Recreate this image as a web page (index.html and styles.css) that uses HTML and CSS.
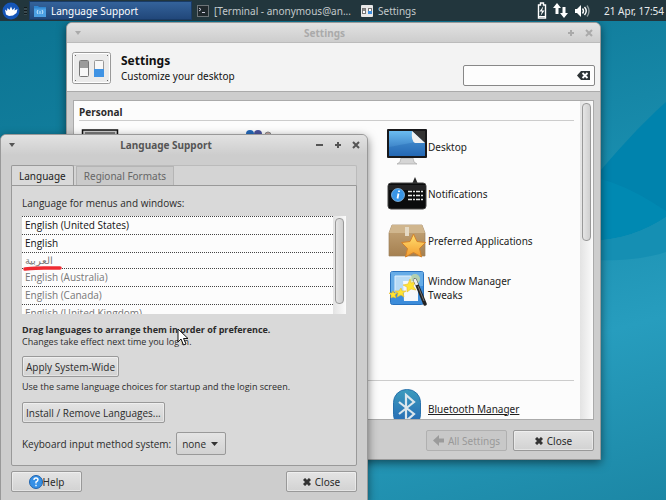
FILE: index.html
```html
<!DOCTYPE html>
<html lang="en">

<head>
    <meta charset="UTF-8">
    <meta name="viewport" content="width=device-width, initial-scale=1">
    <title>Language Support</title>
    <link rel="stylesheet" href="styles.css">
</head>

<body>

    <header class="panel">
        <button class="panel-menu" aria-label="Applications">
            <svg width="18" height="18" viewBox="0 0 18 18">
                <circle cx="9" cy="9" r="8.500" fill="#1556b8" />
                <path d="M4 12.500 3 7.500 5 9 5.500 6 7.500 8 9 4.500 10.500 8 13 5.500 12.500 8.500 15.500 7 14.500 11 11 13.500 7 14Z" fill="#fff" />
            </svg>
        </button>
        <span class="handle"></span>
        <button class="task task-active">
            <svg width="14" height="14" viewBox="0 0 14 14">
                <path d="M1 2h4l1 1h7v9H1z" fill="#2f86d0" />
                <path d="M1 4.500h12V13H1z" fill="#4b9fe2" />
                <path d="M5 6 4 8l1 2M9 6l1 2-1 2M7 7v3" fill="none" stroke="#c5e5ff" />
            </svg>
            <span>Language Support</span>
        </button>
        <button class="task task-terminal">
            <svg width="12" height="12" viewBox="0 0 12 12">
                <rect x=".5" y=".5" width="11" height="11" fill="#20292d" stroke="#6d7478" />
                <path d="m2 3 2 1.500L2 6M5 7.500h3" fill="none" stroke="#ccd" />
            </svg>
            <span>[Terminal - anonymous@an...</span>
        </button>
        <button class="task">
            <svg width="12" height="12" viewBox="0 0 12 12">
                <rect width="12" height="12" rx="1" fill="#e8e8e8" />
                <rect x="1.500" y="3.500" width="3" height="5" fill="#fff" stroke="#777" />
                <rect x="7.500" y="3.500" width="3" height="5" fill="#fff" stroke="#777" />
                <path d="M2 4h2v2H2z" fill="#888" />
                <path d="M7 6h4v3H7z" fill="#3c8ee0" />
            </svg>
            <span>Settings</span>
        </button>
        <div class="tray">
            <svg width="10" height="17" viewBox="0 0 10 17">
                <path d="M3.500 1h3v2h2v13h-7V3h2z" fill="none" stroke="#fff" stroke-width="1.400" />
                <path d="M6.500 4 2.500 9.500H5L3.500 14l4-5.500H5z" fill="#fff" />
                <path d="M2 14.500h6" stroke="#fff" />
            </svg>
            <svg width="15" height="15" viewBox="0 0 15 15">
                <path d="M4 0 0 5h2.500v6h3V5H8zM11 15l4-5h-2.500V4h-3v6H7z" fill="#fff" />
            </svg>
            <svg width="17" height="14" viewBox="0 0 17 14">
                <path d="M1 5h2l4-4v12L3 9H1z" fill="#fff" />
                <path d="M8.500 4.500q2 2.500 0 5M10.500 3q3.500 4 0 8" fill="none" stroke="#fff" stroke-width="1.400" />
                <path d="M13 1.500q4 5.500 0 11" fill="none" stroke="#8d989b" stroke-width="1.400" />
            </svg>
            <time class="clock">21 Apr, 17:54</time>
        </div>
    </header>

    <main class="desktop">
        <svg class="wallpaper" viewBox="0 0 666 479" preserveAspectRatio="none" aria-hidden="true">
            <path d="M666 81C640 104 615 132 590 162V220C620 219 645 210 666 196Z" fill="#0083ad" />
            <path d="M590 155C630 165 650 180 666 190V196C645 210 620 219 590 220Z" fill="#008fb7" opacity=".5" />
            <path d="M666 196C645 210 620 219 590 220V239C620 240 645 238 666 231Z" fill="#158fb3" />
        </svg>

        <section class="window settings">
            <div class="titlebar titlebar-idle">
                <button class="wm-btn" aria-label="Window menu"><svg width="8" height="8" viewBox="0 0 8 8"><path d="M1 2h6L4 6z" /></svg></button>
                <h2>Settings</h2>
                <button class="wm-btn" aria-label="Maximize"><svg width="8" height="8" viewBox="0 0 8 8"><path d="M3 1h2v2h2v2H5v2H3V5H1V3h2z" /></svg></button>
                <button class="wm-btn" aria-label="Close"><svg width="8" height="8" viewBox="0 0 8 8"><path d="m1 1 6 6M7 1 1 7" class="stroke" /></svg></button>
            </div>

            <div class="banner">
                <svg width="39" height="32" viewBox="0 0 39 32">
                    <rect x=".5" y=".5" width="38" height="31" rx="2" fill="#ebebeb" stroke="#999" />
                    <rect x="1.500" y="1.500" width="36" height="29" rx="1" fill="none" stroke="#fff" />
                    <rect x="7.500" y="8.500" width="9" height="16" rx="1" fill="#f8f8f8" stroke="#777" />
                    <path d="M8 9h8v7H8z" fill="#9b9b9b" />
                    <rect x="22.500" y="8.500" width="9" height="16" rx="1" fill="#f8f8f8" stroke="#999" />
                    <path d="M22 17h10v8H22z" fill="#3f93e4" />
                    <path d="M3 3h1v1H3zM35 3h1v1h-1zM3 28h1v1H3zM35 28h1v1h-1z" fill="#666" />
                </svg>
                <div class="banner-text">
                    <h1>Settings</h1>
                    <p>Customize your desktop</p>
                </div>
                <label class="search">
                    <input type="search" aria-label="Search settings">
                    <svg width="13" height="9" viewBox="0 0 13 9">
                        <path d="M4 0h9v9H4L0 4.500z" fill="#2e3436" />
                        <path d="m5.500 2 5 5M10.500 2l-5 5" stroke="#fff" stroke-width="1.800" />
                    </svg>
                </label>
            </div>

            <div class="settings-box">
                <div class="settings-scroll">
                    <section class="group personal">
                        <h3>Personal</h3>
                        <div class="items">
                            <div class="column" aria-hidden="true">
                                <svg width="40" height="36" viewBox="0 0 40 36">
                                    <rect x="3.500" y="1" width="35" height="28" fill="#ccc" stroke="#111" stroke-width="1.500" />
                                    <path d="M6 3h30v3H6z" fill="#777" />
                                </svg>
                            </div>
                            <div class="column" aria-hidden="true">
                                <svg width="44" height="36" viewBox="0 0 44 36">
                                    <circle cx="17" cy="5" r="4" fill="#2468b8" />
                                    <circle cx="25" cy="5" r="4" fill="#4a539c" />
                                    <circle cx="35" cy="6" r="3" fill="#c8a8a0" stroke="#888" />
                                </svg>
                            </div>
                            <div class="column">
                                <a href="#desktop" class="item">
                                    <svg width="40" height="36" viewBox="0 0 40 36">
                                        <defs>
                                            <linearGradient id="screen" x2="0" y2="1">
                                                <stop stop-color="#6bbcf0" />
                                                <stop offset="1" stop-color="#2567b4" />
                                            </linearGradient>
                                        </defs>
                                        <path d="M14 29h12l1 4 3 2H10l3-2z" fill="#d5d5d5" stroke="#aaa" stroke-width=".7" />
                                        <rect width="40" height="29" rx="1" fill="#18181b" />
                                        <path d="M2 2h36v25H2z" fill="url(#screen)" />
                                        <path d="M2 18c15-2 25-6 36-5v14H2z" fill="#2468b5" opacity=".4" />
                                        <path d="M25 2h13v12z" fill="#333" />
                                        <path d="m25 2 13 12H28q-4-2-3-12z" fill="#f1f1f1" />
                                    </svg>
                                    <span>Desktop</span>
                                </a>
                                <a href="#notifications" class="item">
                                    <svg width="40" height="36" viewBox="0 0 40 36">
                                        <path d="m25 8 3-7 3 7z" fill="#292929" />
                                        <rect x="1" y="7" width="38" height="26" rx="3" fill="#0b0c0d" stroke="#444" />
                                        <path d="M2 9h36v5H2z" fill="#333" opacity=".6" />
                                        <circle cx="11" cy="19" r="6.500" fill="#3995e5" stroke="#9ccbf5" stroke-width=".7" />
                                        <path d="M12 14.500v1.500M11.500 17.500l-1 5" stroke="#fff" stroke-width="1.800" />
                                        <path d="M21 15.500h16M21 19.500h16M21 23.500h16" stroke="#e5e5e5" stroke-width="1.300" stroke-dasharray="4 1 2 1" />
                                    </svg>
                                    <span>Notifications</span>
                                </a>
                                <a href="#preferred" class="item">
                                    <svg width="40" height="36" viewBox="0 0 40 36">
                                        <defs>
                                            <linearGradient id="star" x2="0" y2="1">
                                                <stop stop-color="#ffe070" />
                                                <stop offset="1" stop-color="#f39c2f" />
                                            </linearGradient>
                                            <linearGradient id="box" x2="0" y2="1">
                                                <stop stop-color="#c5a67a" />
                                                <stop offset="1" stop-color="#a58050" />
                                            </linearGradient>
                                        </defs>
                                        <path d="M5 2h30l3 8v23H2V10z" fill="url(#box)" stroke="#9c8160" stroke-width=".7" />
                                        <path d="M5 2h30l3 8H2z" fill="#d0b68e" />
                                        <path d="M18 4h4v9h-4z" fill="#e5dac5" />
                                        <path d="m26.500 11 3.500 7.500 8.500 1-6 6 2 8.500-8-4.500-8 4.500 2-8.500-6-6 8.500-1z" fill="url(#star)" stroke="#d4822a" />
                                    </svg>
                                    <span>Preferred Applications</span>
                                </a>
                                <a href="#tweaks" class="item">
                                    <svg width="40" height="36" viewBox="0 0 40 36">
                                        <rect x="3.500" y="1.500" width="33" height="33" rx="2" fill="#3c8cda" stroke="#2871bd" />
                                        <path d="M4 2h32v14Q20 16 4 22z" fill="#78b9ed" opacity=".7" />
                                        <path d="M8 6h16v16H8z" fill="#b7daf5" stroke="#e1f0fc" />
                                        <path d="M16 11h15v20H17z" fill="#f4f7fb" />
                                        <circle cx="28" cy="9" r="5" fill="#e5e78d" opacity=".6" />
                                        <path d="m23 9 1 4 5-1-3 4 3 4-5-1-4 3 0-5-4-2 5-1zM14 18l1 3 4 0-3 2 1 4-3-2-4 2 1-4-3-2 4 0zM6 21l1 2h3l-2 2 1 3-3-1-2 1v-3l-2-2h3z" fill="#ffe433" stroke="#e8ba2a" stroke-width=".6" />
                                        <path d="m28 10 10 24" stroke="#222" stroke-width="3.500" stroke-linecap="round" />
                                        <path d="m27.500 9 2.500 6" stroke="#eee" stroke-width="3" />
                                        <path d="m31 16 6 15" stroke="#777" />
                                    </svg>
                                    <span>Window Manager Tweaks</span>
                                </a>
                            </div>
                        </div>
                    </section>
                    <section class="group hardware">
                        <div class="items">
                            <a href="#bluetooth" class="item item-current">
                                <svg width="40" height="39" viewBox="0 0 40 39">
                                    <defs>
                                        <linearGradient id="bt" x2="0" y2="1">
                                            <stop stop-color="#3c9bbd" />
                                            <stop offset="1" stop-color="#2464b4" />
                                        </linearGradient>
                                    </defs>
                                    <rect x="6.500" y=".5" width="27" height="38" rx="13" fill="url(#bt)" stroke="#2871ac" />
                                    <path d="m12 13 15 12-8 7V6l8 7-15 12" fill="none" stroke="#dce6ec" stroke-width="2.200" />
                                </svg>
                                <span>Bluetooth Manager</span>
                            </a>
                        </div>
                    </section>
                </div>
                <div class="scrollbar"><div class="thumb thumb-settings"></div></div>
            </div>

            <div class="actions">
                <button class="btn btn-wide" disabled>
                    <svg width="11" height="11" viewBox="0 0 11 11"><path d="M6 0v3.500h5v4H6V11L0 5.500z" fill="#9b9b9b" /></svg>
                    All Settings
                </button>
                <button class="btn btn-wide">
                    <svg width="8" height="8" viewBox="0 0 8 8"><path d="m1 1 6 6M7 1 1 7" class="stroke stroke-bold" /></svg>
                    Close
                </button>
            </div>
        </section>

        <section class="window language">
            <div class="titlebar">
                <button class="wm-btn" aria-label="Window menu"><svg width="8" height="8" viewBox="0 0 8 8"><path d="M1 2h6L4 6z" /></svg></button>
                <h2>Language Support</h2>
                <button class="wm-btn" aria-label="Minimize"><svg width="8" height="8" viewBox="0 0 8 8"><path d="M0 3h7v2H0z" /></svg></button>
                <button class="wm-btn" aria-label="Maximize"><svg width="8" height="8" viewBox="0 0 8 8"><path d="M3 1h2v2h2v2H5v2H3V5H1V3h2z" /></svg></button>
                <button class="wm-btn" aria-label="Close"><svg width="8" height="8" viewBox="0 0 8 8"><path d="m1 1 6 6M7 1 1 7" class="stroke" /></svg></button>
            </div>

            <div class="tabs" role="tablist">
                <button class="tab tab-active" role="tab" aria-selected="true">Language</button>
                <button class="tab" role="tab" aria-selected="false">Regional Formats</button>
            </div>

            <div class="page">
                <p class="list-label" id="list-label">Language for menus and windows:</p>
                <div class="list-box">
                    <ul class="languages" aria-labelledby="list-label">
                        <li>English (United States)</li>
                        <li>English</li>
                        <li class="unused marked"><span lang="ar">العربية</span>
                            <svg class="mark" width="40" height="6" viewBox="0 0 40 6" aria-hidden="true"><path d="M2 4Q14 3 21 3T37 3" fill="none" stroke="#ef2b32" stroke-width="3.500" stroke-linecap="round" /></svg>
                        </li>
                        <li class="unused">English (Australia)</li>
                        <li class="unused">English (Canada)</li>
                        <li class="unused">English (United Kingdom)</li>
                    </ul>
                    <div class="scrollbar"><div class="thumb thumb-languages"></div></div>
                </div>
                <p class="hint"><strong>Drag languages to arrange them in order of preference.</strong><br>Changes take effect next time you log in.</p>
                <button class="btn">Apply System-Wide</button>
                <p class="hint hint-apply">Use the same language choices for startup and the login screen.</p>
                <button class="btn">Install / Remove Languages...</button>
                <div class="input-method">
                    <label for="method">Keyboard input method system:</label>
                    <span class="select">
                        <select id="method">
                            <option>none</option>
                        </select>
                        <svg width="7" height="4" viewBox="0 0 7 4"><path d="M0 0h7L3.500 4z" fill="#333" /></svg>
                    </span>
                </div>
            </div>

            <div class="actions actions-split">
                <button class="btn btn-help">
                    <svg width="14" height="14" viewBox="0 0 14 14">
                        <circle cx="7" cy="7" r="6.500" fill="#3590e6" stroke="#2064ae" />
                        <path d="M5 5q0-2 2-2t2 1.800Q9 6 7 7v1.500M7 9.800v1.400" fill="none" stroke="#fff" stroke-width="1.400" />
                    </svg>Help
                </button>
                <button class="btn btn-close">
                    <svg width="8" height="8" viewBox="0 0 8 8"><path d="m1 1 6 6M7 1 1 7" class="stroke stroke-bold" /></svg>
                    Close
                </button>
            </div>
        </section>

        <svg class="pointer" width="12" height="18" viewBox="0 0 12 18" aria-hidden="true">
            <path d="M1 1v13l3-3 2.500 6 2.500-1-2.500-5.500H11z" fill="#fff" stroke="#111" />
        </svg>
    </main>

</body>

</html>
```

FILE: styles.css
```css
* {
    box-sizing: border-box;
}

body {
    display: flex;
    flex-direction: column;
    height: 100vh;
    margin: 0;
    overflow: hidden;
    font-family: "Noto Sans", "DejaVu Sans", sans-serif;
    font-size: 10px;
    line-height: 14px;
    color: #2b2b2b;
}

h1,
h2,
h3,
p,
ul {
    margin: 0;
    padding: 0;
}

button,
input,
select {
    margin: 0;
    padding: 0;
    border: none;
    background: none;
    font: inherit;
    color: inherit;
}

svg {
    flex: none;
}

.stroke {
    fill: none;
    stroke: #555;
    stroke-width: 2;
}

.stroke-bold {
    stroke: #333;
    stroke-width: 3;
}

/* top panel */
.panel {
    display: flex;
    align-items: center;
    height: 21px;
    flex: none;
    background: #22363d;
    color: #c3c9cb;
    white-space: nowrap;
}

.panel-menu {
    display: flex;
    margin: 0 4px 0 2px;
}

.handle {
    width: 3px;
    height: 8px;
    margin-right: 2px;
    background: repeating-linear-gradient(#10191c 0 1px, #3a4a50 1px 3px);
}

.task {
    display: flex;
    align-items: center;
    gap: 5px;
    height: 19px;
    padding: 0 4px;
}

.task-active {
    gap: 4px;
    width: 163px;
    margin-right: 1px;
    padding: 0 3px;
    border: 1px solid #193b66;
    background: linear-gradient(#34639b, #21477a);
    color: #fff;
}

.task-terminal {
    width: 164px;
}

.tray {
    display: flex;
    align-items: center;
    gap: 6px;
    margin-left: auto;
    padding-right: 2px;
}

.clock {
    margin-left: 7px;
    color: #e8ebec;
}

/* desktop */
.desktop {
    position: relative;
    flex: 1;
    overflow: hidden;
    background: linear-gradient(165deg, #0c7492 0%, #127f9e 25%, #1a8fb0 50%, #279dbe 72%, #1c87a5 100%);
}

.wallpaper {
    display: block;
    width: 100%;
    height: 100%;
}

.pointer {
    position: absolute;
    left: 177px;
    top: 307px;
}

/* windows */
.window {
    position: absolute;
    display: flex;
    flex-direction: column;
    border: 1px solid #999;
    border-radius: 6px 6px 0 0;
    background: #cdcdcd;
    box-shadow: 0 3px 10px rgba(0, 0, 0, 0.5);
}

.settings {
    left: 66px;
    right: 65px;
    top: 1px;
    bottom: 40px;
}

.language {
    left: 0;
    right: 298px;
    top: 113px;
    bottom: -1px;
    padding: 0 10px;
}

.titlebar {
    display: flex;
    align-items: center;
    gap: 10px;
    height: 20px;
    flex: none;
    padding: 0 7px;
    border-radius: 5px 5px 0 0;
    background: linear-gradient(#e2e2e2, #cdcdcd);
    color: #555;
}

.language .titlebar {
    margin: 0 -10px 10px;
}

.titlebar h2 {
    flex: 1;
    font-size: 10px;
    text-align: center;
}

.titlebar-idle {
    border-bottom: 1px solid #bbb;
    color: #aaa;
}

.titlebar-idle .stroke {
    stroke: #aaa;
}

.wm-btn {
    display: flex;
    fill: currentColor;
}

/* settings window */
.banner {
    display: flex;
    align-items: center;
    height: 49px;
    flex: none;
    padding: 1px 5px 0;
    border-bottom: 1px solid #aaa;
    background: #f3f3f3;
}

.banner-text {
    flex: 1;
    padding-left: 10px;
    color: #111;
}

.banner h1 {
    font-size: 12px;
    line-height: 16px;
}

.search {
    display: flex;
    align-items: center;
    width: 132px;
    height: 21px;
    margin-top: 16px;
    padding: 0 4px;
    border: 1px solid #888;
    border-radius: 2px;
    background: #fdfdfd;
}

.search input {
    flex: 1;
    min-width: 0;
    outline: none;
}

.settings-box {
    display: flex;
    flex: 1;
    min-height: 0;
    margin: 8px 6px 0;
    border: 1px solid #aaa;
    background: #fcfcfc;
}

.settings-scroll {
    flex: 1;
    overflow: hidden;
    padding: 0 6px 0 5px;
}

.group h3 {
    padding: 4px 0 1px;
    border-bottom: 1px solid #ccc;
    font-size: 10px;
}

.personal {
    height: 279px;
}

.items {
    display: grid;
    grid-template-columns: 154px 154px 1fr;
    padding-top: 8px;
}

.hardware {
    border-top: 1px solid #ccc;
}

.hardware .item {
    grid-column: 3;
}

.column {
    display: flex;
    flex-direction: column;
    align-items: flex-start;
    gap: 11px;
}

.item {
    display: flex;
    align-items: center;
    gap: 1px;
    width: 150px;
    color: #222;
    text-decoration: none;
}

.item-current {
    text-decoration: underline;
}

.actions {
    display: flex;
    justify-content: flex-end;
    gap: 6px;
    padding: 10px 6px 8px;
}

.actions-split {
    justify-content: space-between;
    padding: 5px 0 8px;
}

/* scrollbars */
.scrollbar {
    width: 13px;
    flex: none;
    padding: 2px;
    background: linear-gradient(90deg, #e3e3e3, #fafafa);
}

.thumb {
    width: 9px;
    border: 1px solid #999;
    border-radius: 4px;
    background: linear-gradient(90deg, #e5e5e5, #cfcfcf);
}

.thumb-settings {
    height: 44%;
}

.thumb-languages {
    height: 92%;
}

/* buttons */
.btn {
    display: flex;
    align-items: center;
    justify-content: center;
    gap: 4px;
    height: 21px;
    padding: 0 3px;
    border: 1px solid #999;
    border-radius: 2px;
    background: linear-gradient(#e4e4e4, #d2d2d2);
    box-shadow: inset 0 0 0 1px rgba(255, 255, 255, 0.4);
}

.btn:disabled {
    border-color: #b0b0b0;
    background: #c8c8c8;
    box-shadow: none;
    color: #999;
}

.btn-wide {
    width: 81px;
}

.btn-help,
.btn-close {
    width: 71px;
}

.btn-help {
    gap: 0;
}

/* language window */
.tabs {
    display: flex;
    align-items: flex-end;
    gap: 2px;
    height: 20px;
    flex: none;
    border: 1px solid #bbb;
    border-bottom: none;
    border-radius: 2px 2px 0 0;
    background: #d4d4d4;
}

.tab {
    height: 19px;
    padding: 0 7px;
    border: 1px solid #b5b5b5;
    border-bottom: none;
    background: #cacaca;
    color: #666;
}

.tab-active {
    height: 21px;
    margin: 0 0 -1px -1px;
    border-color: #999;
    border-radius: 2px 2px 0 0;
    background: #d9d9d9;
    color: #222;
}

.page {
    display: flex;
    flex-direction: column;
    align-items: flex-start;
    flex: 1;
    padding: 10px;
    border: 1px solid #999;
    border-radius: 0 0 2px 2px;
    background: #d9d9d9;
    font-family: "Open Sans", "Noto Sans", sans-serif;
}

.list-label {
    margin-bottom: 6px;
}

.list-box {
    display: flex;
    align-self: stretch;
    height: 98px;
    flex: none;
    overflow: hidden;
    background: #fcfcfc;
}

.languages {
    flex: 1;
    list-style: none;
    color: #111;
}

.languages li {
    height: 18px;
    padding: 1px 3px;
    border-top: 1px dotted #444;
}

.languages .unused {
    color: #777;
}

.languages .marked {
    position: relative;
    height: 16px;
    padding-top: 0;
}

.mark {
    position: absolute;
    left: 1px;
    bottom: -3px;
}

.hint {
    margin: 10px 0 8px;
    font-size: 9px;
    line-height: 12px;
}

.hint-apply {
    margin: 4px 0 9px;
}

.input-method {
    display: flex;
    align-items: center;
    gap: 5px;
    margin-top: 9px;
}

.select {
    display: grid;
    align-items: center;
}

.select select,
.select svg {
    grid-area: 1 / 1;
}

.select select {
    appearance: none;
    width: 50px;
    height: 23px;
    padding: 0 5px;
    border: 1px solid #999;
    border-radius: 2px;
    background: linear-gradient(#e4e4e4, #d2d2d2);
}

.select svg {
    justify-self: end;
    margin-right: 8px;
    pointer-events: none;
}
```
